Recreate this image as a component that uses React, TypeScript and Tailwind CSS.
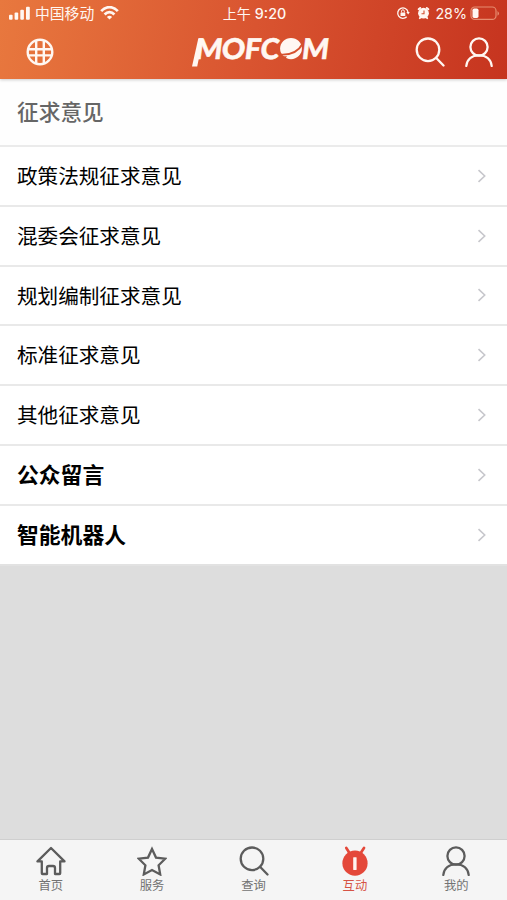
import type { ReactNode } from "react";

const cjk = "font-['Liberation_Sans','Noto_Sans_CJK_SC',sans-serif]";

const rows: { label: string; strong?: boolean }[] = [
  { label: "政策法规征求意见" },
  { label: "混委会征求意见" },
  { label: "规划编制征求意见" },
  { label: "标准征求意见" },
  { label: "其他征求意见" },
  { label: "公众留言", strong: true },
  { label: "智能机器人", strong: true },
];

function Stroke({ children, className, width = 2.3 }: { children: ReactNode; className: string; width?: number }) {
  return (
    <svg viewBox="0 0 30 30" className={className} fill="none" stroke="currentColor" strokeWidth={width}>
      {children}
    </svg>
  );
}

function SearchShape() {
  return (
    <>
      <circle cx="13" cy="12.8" r="11.3" />
      <path d="M21 20.8 28.5 28.5" strokeLinecap="round" />
    </>
  );
}

function UserShape() {
  return (
    <>
      <circle cx="15" cy="10" r="8.6" />
      <path d="M2.3 29C3 22.3 8 18.3 15 18.3S27 22.3 27.7 29" strokeLinecap="round" />
    </>
  );
}

function StatusBar() {
  return (
    <div className="grid h-[27px] grid-cols-[1fr_auto_1fr] items-center pl-[9px] pr-[7px]">
      <div className="flex items-center">
        <svg className="h-[14px] w-[22px]" viewBox="0 0 22 14" fill="currentColor">
          <rect x="0" y="8.7" width="3.6" height="5" rx="1" />
          <rect x="5.6" y="6.4" width="3.6" height="7.3" rx="1" />
          <rect x="11.3" y="3.7" width="3.6" height="10" rx="1" />
          <rect x="17" y="0.8" width="3.8" height="12.9" rx="1" />
        </svg>
        <span className="ml-[4px] pt-[2px] text-[14.8px] leading-none">中国移动</span>
        <svg className="ml-[6px] h-[14px] w-[19px]" viewBox="0 0 19 14" fill="none" stroke="currentColor" strokeWidth="2.7">
          <path d="M1.2 5.2C6-.2 13-.2 17.8 5.2" />
          <path d="M4.6 8.5C7.5 5.4 11.5 5.4 14.4 8.5" />
          <path d="M6.9 10.9Q9.5 8.6 12.1 10.9L9.5 13.6Z" fill="currentColor" stroke="none" />
        </svg>
      </div>
      <div className="flex items-center gap-[4px] pt-[1px] leading-none">
        <span className="text-[14px]">上午</span>
        <span className="font-['Inter',sans-serif] text-[14.3px] font-medium">9:20</span>
      </div>
      <div className="flex items-center justify-end">
        <svg className="h-[14px] w-[14px]" viewBox="0 0 14 14" fill="none" stroke="currentColor" strokeWidth="1.3">
          <path d="M10.7 10.7A5.2 5.2 0 1 1 12 6" />
          <path d="M10.3 6h3.4l-1.5 2.5z" fill="currentColor" stroke="none" />
          <rect x="4.5" y="6.4" width="4.8" height="3.6" rx=".5" fill="currentColor" stroke="none" />
          <path d="M5.5 6.4V5.2a1.4 1.4 0 0 1 2.8 0v1.2" strokeWidth="1" />
        </svg>
        <svg className="ml-[7px] h-[14px] w-[13px]" viewBox="0 0 13 14">
          <circle cx="6.5" cy="7.2" r="5.4" fill="currentColor" />
          <path d="M1.6 3.2 3.2 1.9M9.8 1.9 11.4 3.2M2.8 12.2l1-1M10.2 12.2l-1-1" stroke="currentColor" strokeWidth="1.9" strokeLinecap="round" />
          <path d="M7 4.4v3.3H4.5" fill="none" stroke="#d45031" strokeWidth="1.1" />
        </svg>
        <span className="ml-[5px] pt-[1px] font-['Inter',sans-serif] text-[14.3px] leading-none">28%</span>
        <svg className="ml-[3px] h-[15px] w-[30px]" viewBox="0 0 30 15">
          <rect x="1" y="1" width="25" height="12.4" rx="3.7" fill="none" stroke="#e68c70" strokeWidth="1.2" />
          <rect x="2.5" y="2.6" width="6" height="9.3" rx="1.6" fill="currentColor" />
          <path d="M27.5 5v4.7q3-2.3 0-4.7" fill="#e68c70" />
        </svg>
      </div>
    </div>
  );
}

function Logo() {
  return (
    <svg className="h-[44px] w-[142px]" viewBox="190 27 142 44" fill="currentColor">
      <g
        className="font-['Lato',sans-serif] font-black"
        fontSize="28.5"
        stroke="currentColor"
        strokeWidth=".5"
        transform="translate(0 58.9) skewX(-7)"
      >
        <text x="194.4" y="0" textLength="27" lengthAdjust="spacingAndGlyphs">M</text>
        <text x="220.8" y="0" textLength="23.4" lengthAdjust="spacingAndGlyphs">O</text>
        <text x="243.8" y="0" textLength="16" lengthAdjust="spacingAndGlyphs">F</text>
        <text x="259.4" y="0" textLength="18.6" lengthAdjust="spacingAndGlyphs">C</text>
        <text x="301" y="0" textLength="27" lengthAdjust="spacingAndGlyphs">M</text>
      </g>
      <path d="M198.3 38.4h4L200 53 197.2 66.5h-5.2Z" />
      <ellipse cx="291" cy="48.6" rx="10.9" ry="10.6" />
      <path d="M279 54.4C290 55.4 298.5 51.5 302.6 43.8" fill="none" stroke="#d6512f" strokeWidth="1.9" />
      <path d="M279 55C281 56 284 56.4 287 56.2L284.5 60H279Z" fill="#d6512f" />
    </svg>
  );
}

function NavBar() {
  return (
    <div className="grid h-[52px] grid-cols-[1fr_auto_1fr] items-start pl-[25px] pr-[13px]">
      <Stroke className="mt-[10px] h-[30px] w-[30px]" width={2.4}>
        <circle cx="15" cy="15" r="12.3" />
        <path d="M11.2 3.2V26.8M18.8 3.2V26.8M3 12.2H27M3 18.4H27" />
      </Stroke>
      <div className="-ml-[6px] -mr-[6px] translate-x-[1px]">
        <Logo />
      </div>
      <div className="flex justify-end gap-[19px] pt-[10px]">
        <Stroke className="h-[30px] w-[30px]"><SearchShape /></Stroke>
        <Stroke className="h-[30px] w-[30px]"><UserShape /></Stroke>
      </div>
    </div>
  );
}

function Tab({ label, active, children }: { label: string; active?: boolean; children: ReactNode }) {
  return (
    <div className={"flex flex-1 flex-col items-center pt-[6px] " + (active ? "text-[#e4483a]" : "text-[#5c5c5c]")}>
      {children}
      <span className={"mt-[3px] text-[12.3px] leading-[14px] " + (active ? "text-[#d65345]" : "text-[#737373]")}>{label}</span>
    </div>
  );
}

export default function App() {
  return (
    <div className={"flex h-[900px] w-[507px] flex-col overflow-hidden bg-[#dddddd] " + cjk}>
      <header className="z-10 h-[79px] shrink-0 bg-linear-[100deg] from-[#e8783e] via-[#d95430] to-[#c6341f] text-[#fff7f2] shadow-[0_1px_3px_rgba(0,0,0,0.2)]">
        <StatusBar />
        <NavBar />
      </header>
      <main className="flex-1">
        <h1 className="flex h-[68px] items-center border-b-2 border-[#ebebeb] bg-[#fefefe] pl-[17px] pt-[2px] text-[21.7px] font-medium leading-none text-[#666666]">
          征求意见
        </h1>
        <ul>
          {rows.map(({ label, strong }) => (
            <li key={label} className="flex h-[59.8px] items-center justify-between border-b-2 border-[#e9e9e9] bg-white pl-[17px] pr-[20px] text-black last:border-[#e2e2e2]">
              <span className={strong ? "pt-[3px] text-[21.8px] font-bold leading-none" : "pt-[3px] text-[20.6px] leading-none"}>{label}</span>
              <svg className="h-[14px] w-[10px]" viewBox="0 0 10 14" fill="none" stroke="#c7c7cc" strokeWidth="1.6">
                <path d="M1.5 1.2 7.7 7l-6.2 5.8" />
              </svg>
            </li>
          ))}
        </ul>
      </main>
      <nav className="flex h-[61px] shrink-0 border-t border-[#cfcfcf] bg-[#f5f5f5]">
        <Tab label="首页">
          <Stroke className="h-[30px] w-[30px]">
            <path d="M15 2 1.5 15.4H5.8V27.2Q5.8 28 6.6 28H11V22q0-2 2-2h4q2 0 2 2v6h4.4q.8 0 .8-.8V15.4h4.3Z" strokeLinejoin="round" />
          </Stroke>
        </Tab>
        <Tab label="服务">
          <Stroke className="h-[30px] w-[30px]">
            <path d="m15 3 4 8.6 9.2 1.1-6.6 6.6 1.6 9.1L15 24.1l-8.2 4.3 1.6-9.1-6.6-6.6L11 11.6Z" />
          </Stroke>
        </Tab>
        <Tab label="查询">
          <Stroke className="h-[30px] w-[30px]"><SearchShape /></Stroke>
        </Tab>
        <Tab label="互动" active>
          <svg className="h-[30px] w-[30px]" viewBox="0 0 30 30" fill="currentColor">
            <circle cx="15" cy="17.2" r="12.6" />
            <path d="M6.3 2 9.5 7M24 2l-3.3 5" stroke="currentColor" strokeWidth="2.7" strokeLinecap="round" />
            <rect x="13.2" y="11.3" width="3.4" height="12.6" rx=".4" fill="#fff5f1" />
          </svg>
        </Tab>
        <Tab label="我的">
          <Stroke className="h-[30px] w-[30px]"><UserShape /></Stroke>
        </Tab>
      </nav>
    </div>
  );
}
